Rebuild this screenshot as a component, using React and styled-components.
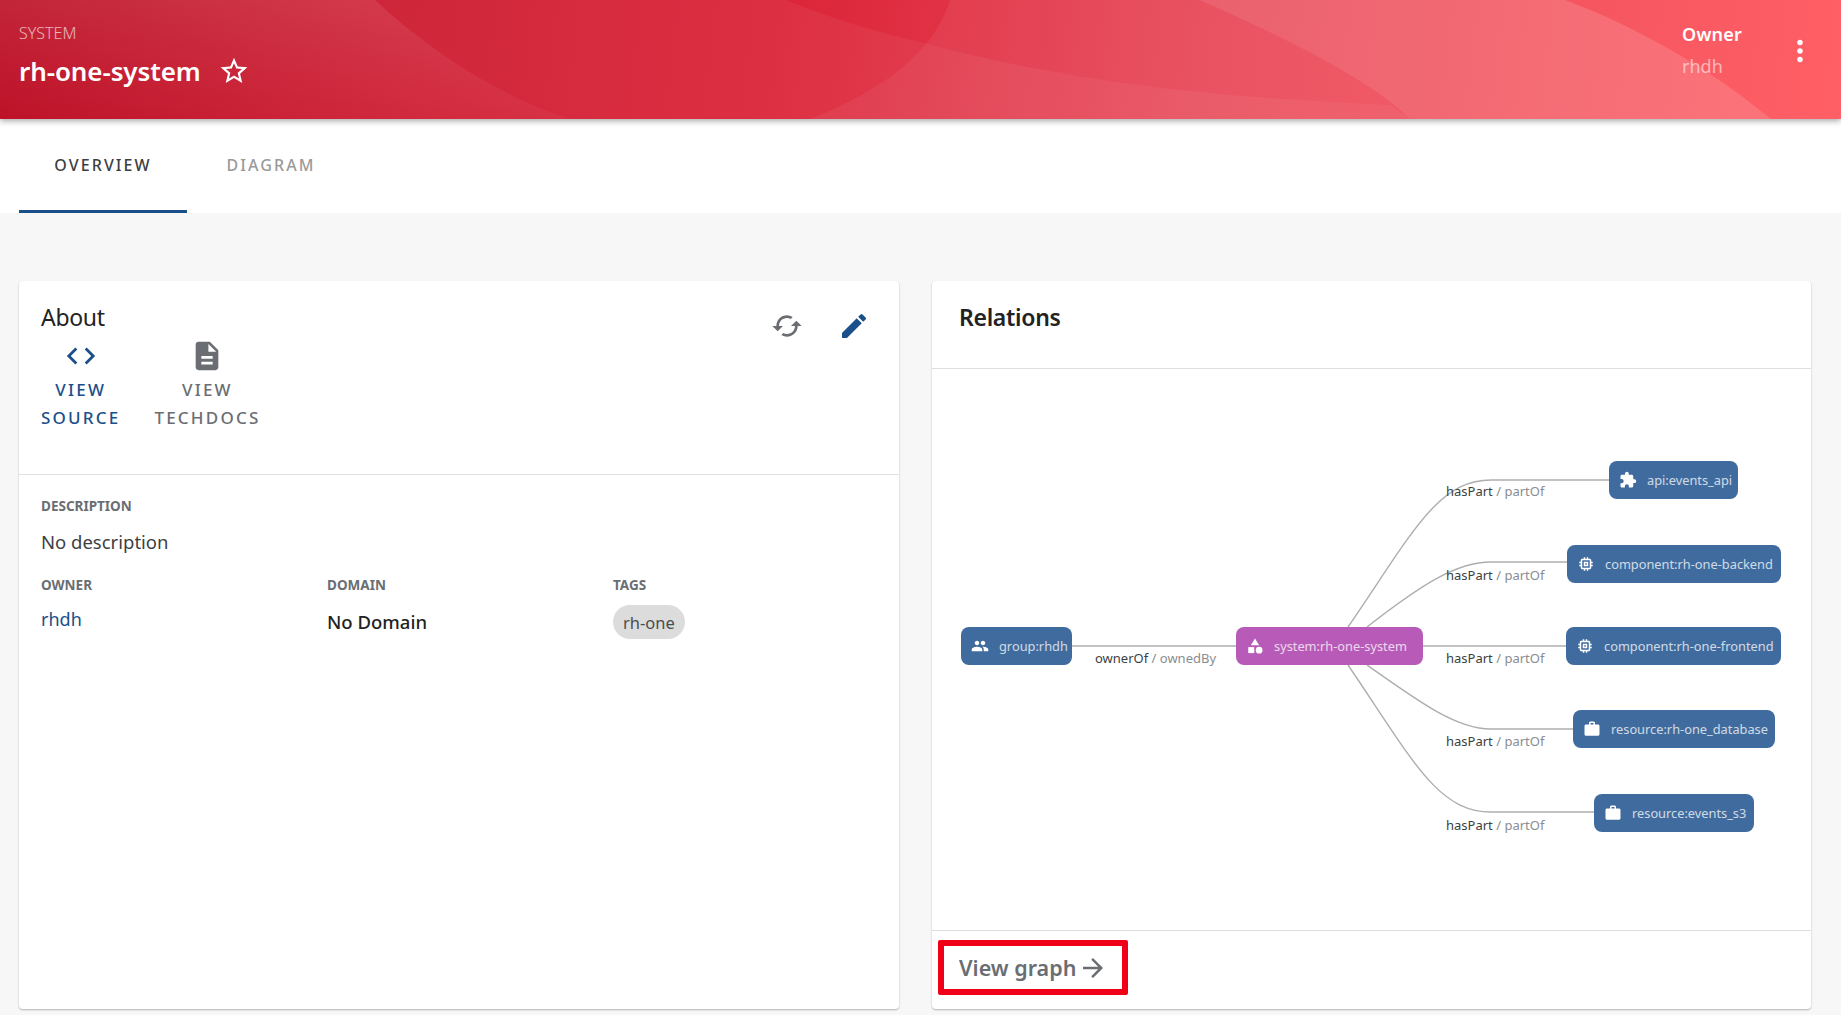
import React from 'react';
import styled, { createGlobalStyle } from 'styled-components';
import {
  MdStarBorder,
  MdMoreVert,
  MdCode,
  MdDescription,
  MdEdit,
  MdCached,
  MdPeople,
  MdCategory,
  MdExtension,
  MdMemory,
  MdWork,
  MdArrowForward,
} from 'react-icons/md';

const GlobalStyle = createGlobalStyle`
  html, body {
    margin: 0;
    height: 100%;
    overflow: hidden;
    background: #f7f7f7;
    font-family: "Noto Sans", "Open Sans", sans-serif;
  }
`;

const Page = styled.div`
  display: flex;
  flex-direction: column;
  height: 1015px;
`;

const Header = styled.header`
  position: relative;
  z-index: 2;
  flex: none;
  height: 119px;
  display: flex;
  align-items: flex-start;
  justify-content: space-between;
  padding: 0 36px 0 19px;
  box-sizing: border-box;
  color: #fff;
  background: linear-gradient(97deg, #bd1228 0%, #dc2438 42%, #e84858 65%, #ff5f65 100%);
  box-shadow: 0 2px 6px rgba(0, 0, 0, 0.35);
  overflow: hidden;
`;

const HeaderArt = styled.svg`
  position: absolute;
  inset: 0;
  width: 100%;
  height: 100%;
`;

const HeaderTitles = styled.div`
  position: relative;
  padding-top: 23px;
`;

const Kind = styled.div`
  font-size: 16px;
  line-height: 20px;
  font-weight: 300;
  opacity: 0.65;
`;

const TitleRow = styled.div`
  display: flex;
  align-items: center;
  gap: 17px;
  margin-top: 6px;
  height: 44px;
`;

const Title = styled.h1`
  margin: 0;
  font-size: 26px;
  font-weight: 600;
  letter-spacing: -0.1px;
`;

const HeaderRight = styled.div`
  position: relative;
  display: flex;
  align-items: flex-start;
  gap: 58px;
  padding-top: 21px;
`;

const OwnerLabel = styled.div`
  font-size: 18px;
  line-height: 26px;
  font-weight: 600;
  letter-spacing: 0.2px;
`;

const OwnerValue = styled.div`
  margin-top: 6px;
  font-size: 18px;
  line-height: 26px;
  opacity: 0.55;
`;

const MoreButton = styled.span`
  display: flex;
  margin: 13px -12px 0 -17px;
`;

const Tabs = styled.nav`
  position: relative;
  z-index: 1;
  flex: none;
  display: flex;
  height: 94px;
  padding-left: 19px;
  background: #fff;
`;

const Tab = styled.div`
  display: flex;
  align-items: center;
  justify-content: center;
  box-sizing: border-box;
  width: ${(p) => p.$width}px;
  padding-top: 1px;
  font-size: 16px;
  font-weight: 500;
  letter-spacing: 2.1px;
  color: ${(p) => (p.$active ? '#3c3f42' : '#9a9a9a')};
  border-bottom: 3px solid ${(p) => (p.$active ? '#1b4f8a' : 'transparent')};
`;

const Content = styled.main`
  flex: 1;
  display: grid;
  grid-template-columns: 880px 879px;
  column-gap: 33px;
  padding: 68px 0 6px 19px;
  min-height: 0;
`;

const Card = styled.section`
  display: flex;
  flex-direction: column;
  background: #fff;
  border-radius: 4px;
  box-shadow: 0 1px 2px rgba(0, 0, 0, 0.28);
  min-height: 0;
`;

const AboutTop = styled.div`
  height: 194px;
  box-sizing: border-box;
  padding: 21px 22px 0;
  border-bottom: 1px solid #e2e2e2;
`;

const AboutHeading = styled.div`
  display: flex;
  justify-content: space-between;
  height: 37px;
`;

const CardTitle = styled.h2`
  margin: 0;
  font-size: 23px;
  line-height: 30px;
  font-weight: ${(p) => p.$weight || 400};
  letter-spacing: -0.3px;
  color: #222;
`;

const Actions = styled.div`
  display: flex;
  gap: 35px;
  margin: 8px 7px 0 0;
  align-items: flex-start;
`;

const IconSlot = styled.span`
  display: flex;
  color: ${(p) => p.$color};
`;

const Links = styled.div`
  display: flex;
  gap: 34px;
`;

const LinkItem = styled.div`
  display: flex;
  flex-direction: column;
  align-items: center;
  text-align: center;
  color: ${(p) => p.$color};
`;

const LinkLabel = styled.div`
  margin-top: 3px;
  font-size: 17px;
  line-height: 28px;
  font-weight: 500;
  letter-spacing: 2.2px;
`;

const AboutBody = styled.div`
  padding: 21px 22px 0;
`;

const FieldLabel = styled.div`
  font-size: 13.5px;
  line-height: 20px;
  font-weight: 700;
  color: #6a6e73;
`;

const Description = styled.div`
  margin-top: 13px;
  font-size: 18.5px;
  line-height: 26px;
  color: #3c3f42;
`;

const MetaGrid = styled.div`
  display: grid;
  grid-template-columns: repeat(3, 286px);
  margin-top: 20px;
`;

const MetaLink = styled.div`
  margin-top: 11px;
  font-size: 18px;
  line-height: 26px;
  color: #1b4f8a;
`;

const MetaValue = styled.div`
  margin-top: 14px;
  font-size: 18.5px;
  line-height: 26px;
  font-weight: 500;
  color: #222;
`;

const Chip = styled.span`
  display: inline-flex;
  align-items: center;
  height: 34px;
  margin-top: 10px;
  padding: 0 10px;
  border-radius: 17px;
  background: #dcdcdc;
  font-size: 16.5px;
  color: #4a4d50;
`;

const RelationsHeader = styled.div`
  flex: none;
  height: 88px;
  box-sizing: border-box;
  padding: 21px 27px 0;
  border-bottom: 1px solid #dedede;
`;

const GraphCanvas = styled.div`
  position: relative;
  flex: 1;
`;

const GraphEdges = styled.svg`
  position: absolute;
  inset: 0;
  width: 100%;
  height: 100%;
`;

const GraphNode = styled.div`
  position: absolute;
  left: ${(p) => p.$x}px;
  top: ${(p) => p.$y}px;
  width: ${(p) => p.$w}px;
  height: 38px;
  display: flex;
  align-items: center;
  gap: 10px;
  box-sizing: border-box;
  padding-left: 10px;
  border-radius: 8px;
  background: ${(p) => (p.$kind === 'system' ? '#b85bb8' : '#3f6b9e')};
  color: #fff;
  font-size: 12.8px;
  white-space: nowrap;
`;

const NodeText = styled.span`
  opacity: 0.75;
`;

const EdgeLabel = styled.div`
  position: absolute;
  left: ${(p) => p.$x}px;
  top: ${(p) => p.$y}px;
  font-size: 13px;
  line-height: 16px;
  color: #8a8d90;
  white-space: nowrap;
`;

const EdgeLabelStrong = styled.span`
  color: #3c3f42;
`;

const CardFooter = styled.div`
  flex: none;
  height: 79px;
  box-sizing: border-box;
  padding: 9px 0 0 6px;
  border-top: 1px solid #dedede;
`;

const HighlightBox = styled.div`
  display: inline-flex;
  align-items: center;
  gap: 2px;
  box-sizing: border-box;
  width: 190px;
  height: 55px;
  padding-left: 15px;
  border: 6px solid #f00018;
  border-radius: 2px;
  font-size: 21.5px;
  font-weight: 600;
  color: #6a6e73;
`;

// canvas coordinates, canvas starts at x=933 y=369 of the page
const nodes = [
  { id: 'group', label: 'group:rhdh', x: 29, y: 258, w: 111, Icon: MdPeople },
  { id: 'system', label: 'system:rh-one-system', x: 304, y: 258, w: 187, Icon: MdCategory, kind: 'system' },
  { id: 'api', label: 'api:events_api', x: 677, y: 92, w: 129, Icon: MdExtension },
  { id: 'backend', label: 'component:rh-one-backend', x: 635, y: 176, w: 214, Icon: MdMemory },
  { id: 'frontend', label: 'component:rh-one-frontend', x: 634, y: 258, w: 215, Icon: MdMemory },
  { id: 'db', label: 'resource:rh-one_database', x: 641, y: 341, w: 202, Icon: MdWork },
  { id: 's3', label: 'resource:events_s3', x: 662, y: 425, w: 160, Icon: MdWork },
];

const edges = [
  'M140 277 H304',
  'M491 277 H634',
  'M416 258 C 480 165, 505 111, 559 111 H677',
  'M435 258 C 490 215, 525 193, 559 193 H635',
  'M435 296 C 490 335, 525 360, 559 360 H641',
  'M416 296 C 480 390, 505 443, 559 443 H662',
];

const labels = [
  { strong: 'ownerOf', rest: 'ownedBy', x: 163, y: 281 },
  { strong: 'hasPart', rest: 'partOf', x: 514, y: 114 },
  { strong: 'hasPart', rest: 'partOf', x: 514, y: 198 },
  { strong: 'hasPart', rest: 'partOf', x: 514, y: 281 },
  { strong: 'hasPart', rest: 'partOf', x: 514, y: 364 },
  { strong: 'hasPart', rest: 'partOf', x: 514, y: 448 },
];

const BannerArt = () => (
  <HeaderArt viewBox="0 0 1841 119" preserveAspectRatio="none">
    <defs>
      <linearGradient id="fade" x1="0" y1="1" x2="1" y2="0">
        <stop offset="0" stopColor="#fff" stopOpacity="0" />
        <stop offset="1" stopColor="#fff" stopOpacity="0.16" />
      </linearGradient>
    </defs>
    <path d="M0 0 H375 C 440 60 510 100 570 119 H0 Z" fill="url(#fade)" />
    <path d="M375 0 H786 C 830 18 870 30 920 42 C 1100 90 1250 98 1390 105 L1410 119 H570 C 510 100 440 60 375 0 Z" fill="#fff" fillOpacity="0.05" />
    <path d="M950 0 C 935 50 885 90 810 119 H1771 C 1700 60 1620 20 1565 0 Z" fill="#fff" fillOpacity="0.06" />
    <path d="M1200 0 C 1290 40 1370 80 1410 119 H1771 C 1700 60 1620 20 1565 0 Z" fill="#fff" fillOpacity="0.09" />
  </HeaderArt>
);

const RelationsGraph = () => (
  <GraphCanvas>
    <GraphEdges>
      {edges.map((d) => (
        <path key={d} d={d} fill="none" stroke="#aeaeae" strokeWidth="1.4" />
      ))}
    </GraphEdges>
    {labels.map((l) => (
      <EdgeLabel key={l.y + l.strong} $x={l.x} $y={l.y}>
        <EdgeLabelStrong>{l.strong}</EdgeLabelStrong> / {l.rest}
      </EdgeLabel>
    ))}
    {nodes.map(({ id, label, x, y, w, Icon, kind }) => (
      <GraphNode key={id} $x={x} $y={y} $w={w} $kind={kind}>
        <Icon size={18} />
        <NodeText>{label}</NodeText>
      </GraphNode>
    ))}
  </GraphCanvas>
);

const App = () => (
  <Page>
    <GlobalStyle />
    <Header>
      <BannerArt />
      <HeaderTitles>
        <Kind>SYSTEM</Kind>
        <TitleRow>
          <Title>rh-one-system</Title>
          <MdStarBorder size={32} />
        </TitleRow>
      </HeaderTitles>
      <HeaderRight>
        <div>
          <OwnerLabel>Owner</OwnerLabel>
          <OwnerValue>rhdh</OwnerValue>
        </div>
        <MoreButton>
          <MdMoreVert size={34} />
        </MoreButton>
      </HeaderRight>
    </Header>
    <Tabs>
      <Tab $active $width={168}>OVERVIEW</Tab>
      <Tab $width={168}>DIAGRAM</Tab>
    </Tabs>
    <Content>
      <Card>
        <AboutTop>
          <AboutHeading>
            <CardTitle>About</CardTitle>
            <Actions>
              <IconSlot $color="#6a6e73"><MdCached size={32} /></IconSlot>
              <IconSlot $color="#1b4f8a"><MdEdit size={32} /></IconSlot>
            </Actions>
          </AboutHeading>
          <Links>
            <LinkItem $color="#1b4f8a">
              <MdCode size={34} />
              <LinkLabel>VIEW<br />SOURCE</LinkLabel>
            </LinkItem>
            <LinkItem $color="#6a6e73">
              <MdDescription size={34} />
              <LinkLabel>VIEW<br />TECHDOCS</LinkLabel>
            </LinkItem>
          </Links>
        </AboutTop>
        <AboutBody>
          <FieldLabel>DESCRIPTION</FieldLabel>
          <Description>No description</Description>
          <MetaGrid>
            <div>
              <FieldLabel>OWNER</FieldLabel>
              <MetaLink>rhdh</MetaLink>
            </div>
            <div>
              <FieldLabel>DOMAIN</FieldLabel>
              <MetaValue>No Domain</MetaValue>
            </div>
            <div>
              <FieldLabel>TAGS</FieldLabel>
              <Chip>rh-one</Chip>
            </div>
          </MetaGrid>
        </AboutBody>
      </Card>
      <Card>
        <RelationsHeader>
          <CardTitle $weight={600}>Relations</CardTitle>
        </RelationsHeader>
        <RelationsGraph />
        <CardFooter>
          <HighlightBox>
            View graph
            <MdArrowForward size={30} />
          </HighlightBox>
        </CardFooter>
      </Card>
    </Content>
  </Page>
);

export default App;
